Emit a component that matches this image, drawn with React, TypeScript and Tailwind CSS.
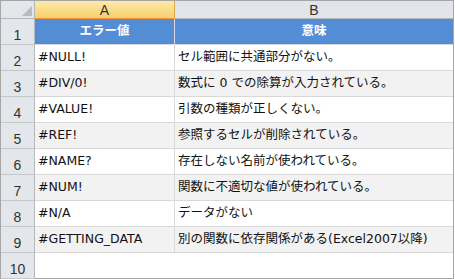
import React from "react";

const rows: [string, string][] = [
  ["#NULL!", "セル範囲に共通部分がない。"],
  ["#DIV/0!", "数式に 0 での除算が入力されている。"],
  ["#VALUE!", "引数の種類が正しくない。"],
  ["#REF!", "参照するセルが削除されている。"],
  ["#NAME?", "存在しない名前が使われている。"],
  ["#NUM!", "関数に不適切な値が使われている。"],
  ["#N/A", "データがない"],
  ["#GETTING_DATA", "別の関数に依存関係がある(Excel2007以降)"],
];

const font = { fontFamily: '"DejaVu Sans", "Noto Sans CJK JP", sans-serif' };
const headFont = { fontFamily: '"Liberation Sans", Arial, sans-serif' };

function RowHead({ n }: { n: number }) {
  return (
    <div
      className="h-[26px] w-[34px] border-b border-r border-b-[#c4c8cd] border-r-[#b4b8bd] bg-[#e3e6ea] flex items-end justify-center pb-[2px] text-[14px] leading-none text-[#333]"
      style={headFont}
    >
      {n}
    </div>
  );
}

export default function App() {
  return (
    <div className="w-[455px] h-[279px] bg-white overflow-hidden" style={font}>
      <div className="w-[454px] h-[279px] border-t border-l border-r border-[#a6a6a6] flex flex-col">
        {/* column header row */}
        <div className="flex h-[18px]" style={headFont}>
          <div className="w-[34px] h-[18px] border-b border-r border-[#b4b8bd] bg-[#e3e6ea] relative">
            <svg className="absolute right-[2px] bottom-[2px]" width="10" height="10" viewBox="0 0 10 10">
              <polygon points="10,0 10,10 0,10" fill="#b8bcc1" />
            </svg>
          </div>
          <div className="w-[140px] h-[18px] border-b border-r border-b-[#f29436] border-r-[#e0a84a] bg-gradient-to-b from-[#fdeaa8] to-[#f7cf6c] flex items-center justify-center text-[14px] leading-none text-[#333]">
            A
          </div>
          <div className="flex-1 h-[18px] border-b border-[#b4b8bd] bg-[#e1e4e8] flex items-center justify-center text-[14px] leading-none text-[#333]">
            B
          </div>
        </div>
        {/* row 1 header */}
        <div className="flex">
          <RowHead n={1} />
          <div className="w-[140px] h-[26px] border-b border-r border-[#d9d9d9] bg-[#538dd5] flex items-center justify-center text-[12.5px] font-bold text-white">
            エラー値
          </div>
          <div className="flex-1 h-[26px] border-b border-[#d9d9d9] bg-[#538dd5] flex items-center justify-center text-[12.5px] font-bold text-white">
            意味
          </div>
        </div>
        {rows.map(([a, b], i) => (
          <div className="flex" key={i}>
            <RowHead n={i + 2} />
            <div
              className={`w-[140px] h-[26px] border-b border-r border-[#d9d9d9] flex items-center pl-[3px] text-[12.5px] text-[#111] whitespace-nowrap ${
                i % 2 === 1 ? "bg-[#f2f2f2]" : "bg-white"
              }`}
            >
              {a}
            </div>
            <div
              className={`flex-1 h-[26px] border-b border-[#d9d9d9] flex items-center pl-[3px] text-[12.5px] text-[#111] whitespace-nowrap ${
                i % 2 === 1 ? "bg-[#f2f2f2]" : "bg-white"
              }`}
            >
              {b}
            </div>
          </div>
        ))}
        <div className="flex">
          <RowHead n={10} />
          <div className="flex-1 h-[26px] border-b border-[#a6a6a6] bg-white" />
        </div>
      </div>
    </div>
  );
}
